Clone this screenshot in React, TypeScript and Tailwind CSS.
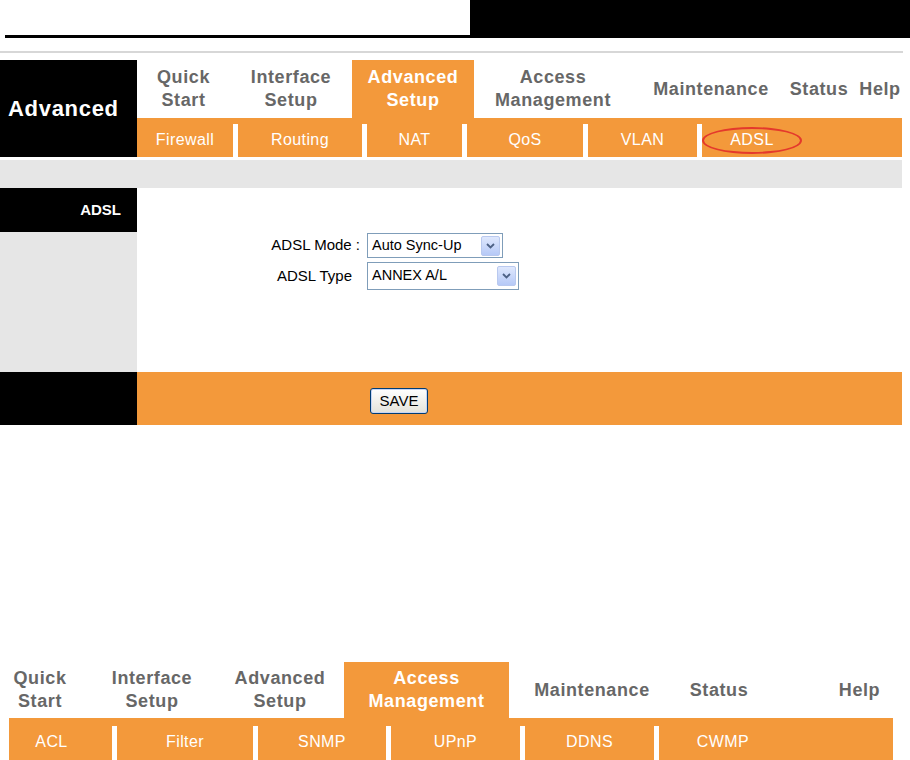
import React from "react"

type TopItem = { lines: string[]; w: string; active?: boolean }
type SubItem = { label: string; w: string; circled?: boolean; extra?: string }

const advancedTop: TopItem[] = [
  { lines: ["Quick", "Start"], w: "w-[93px]" },
  { lines: ["Interface", "Setup"], w: "w-[122px]" },
  { lines: ["Advanced", "Setup"], w: "w-[122px]", active: true },
  { lines: ["Access", "Management"], w: "w-[158px]" },
  { lines: ["Maintenance"], w: "w-[158px]" },
  { lines: ["Status"], w: "w-[58px]" },
  { lines: [""], w: "w-[10px]" },
  { lines: ["Help"], w: "w-[44px]" },
]

const advancedSub: SubItem[] = [
  { label: "Firewall", w: "w-[96px]" },
  { label: "Routing", w: "w-[124px]" },
  { label: "NAT", w: "w-[95px]" },
  { label: "QoS", w: "w-[116px]" },
  { label: "VLAN", w: "w-[109px]" },
  { label: "ADSL", w: "w-[100px]", circled: true },
]

const accessTop: TopItem[] = [
  { lines: ["Quick", "Start"], w: "w-[62px]" },
  { lines: ["Interface", "Setup"], w: "w-[162px]" },
  { lines: ["Advanced", "Setup"], w: "w-[94px]" },
  { lines: [""], w: "w-[17px]" },
  { lines: ["Access", "Management"], w: "w-[165px]", active: true },
  { lines: ["Maintenance"], w: "w-[166px]" },
  { lines: ["Status"], w: "w-[88px]" },
  { lines: [""], w: "w-[63px]" },
  { lines: ["Help"], w: "w-[67px]" },
]

const accessSub: SubItem[] = [
  { label: "ACL", w: "w-[103px]", extra: "pr-[18px]" },
  { label: "Filter", w: "w-[136px]" },
  { label: "SNMP", w: "w-[128px]" },
  { label: "UPnP", w: "w-[129px]" },
  { label: "DDNS", w: "w-[129px]" },
  { label: "CWMP", w: "w-[128px]" },
]

function TopRow({ items, h }: { items: TopItem[]; h: string }) {
  return (
    <div className={`flex ${h}`}>
      {items.map((it, i) => (
        <div
          key={i}
          className={`${it.w} flex shrink-0 flex-col items-center justify-center text-center text-[18px] font-bold leading-[23px] tracking-[0.6px] ${
            it.active ? "bg-[#f3993b] text-white" : "text-[#676767]"
          }`}
        >
          {it.lines.map((l, j) => (
            <span key={j} className="whitespace-nowrap">
              {l}
            </span>
          ))}
        </div>
      ))}
    </div>
  )
}

function SubRow({ items, h, sepTop, pad }: { items: SubItem[]; h: string; sepTop: string; pad: string }) {
  return (
    <div className={`flex ${h} bg-[#f3993b] text-[16px] tracking-[0.4px] text-white`}>
      {items.map((it, i) => (
        <React.Fragment key={i}>
          {i > 0 && <div className={`w-[5px] shrink-0 bg-white ${sepTop}`} />}
          <div className={`relative flex shrink-0 items-center justify-center ${pad} ${it.w} ${it.extra ?? ""}`}>
            {it.label}
            {it.circled && (
              <span className="absolute left-0 top-[9px] h-[27px] w-[100px] rounded-[50%] border-2 border-[#e4392c]" />
            )}
          </div>
        </React.Fragment>
      ))}
      <div className="flex-1" />
    </div>
  )
}

function Chevron() {
  return (
    <svg width="9" height="6" viewBox="0 0 9 6">
      <path d="M1 1 L4.5 4.5 L8 1" fill="none" stroke="#4d6185" strokeWidth="1.8" />
    </svg>
  )
}

function Select({ value, w, h }: { value: string; w: string; h: string }) {
  return (
    <div className={`flex ${w} ${h} items-center justify-between border border-[#7f9db9] bg-white pl-[4px] pr-[2px] text-[14.5px] text-black`}>
      <span className="whitespace-nowrap">{value}</span>
      <span className="flex h-[20px] w-[19px] items-center justify-center rounded-[2px] border border-[#b9c9ef] bg-gradient-to-b from-[#dfe8fd] to-[#b6c9f7]">
        <Chevron />
      </span>
    </div>
  )
}

export default function App() {
  return (
    <div className="h-[760px] w-[910px] overflow-hidden bg-white font-['Liberation_Sans',Arial,sans-serif]">
      {/* page header */}
      <div className="flex h-[38px]">
        <div className="flex w-[470px] flex-col justify-end pl-[5px]">
          <div className="h-[3px] bg-black" />
        </div>
        <div className="flex-1 bg-black" />
      </div>
      <div className="mt-[13px] h-[2px] w-[903px] bg-[#d7d7d7]" />

      {/* Advanced setup screen */}
      <div className="mt-[7px] flex w-[902px]">
        <div className="flex w-[137px] items-center bg-black pl-[8px] text-[22px] font-bold tracking-[0.7px] text-white">
          Advanced
        </div>
        <div className="flex flex-1 flex-col">
          <TopRow items={advancedTop} h="h-[58px]" />
          <SubRow items={advancedSub} h="h-[39px]" sepTop="mt-[6px]" pad="pt-[5px]" />
        </div>
      </div>
      <div className="mt-[3px] h-[28px] w-[902px] bg-[#e6e6e6]" />

      <div className="flex w-[902px]">
        <div className="flex w-[137px] flex-col">
          <div className="flex h-[44px] items-center justify-end bg-black pr-[16px] text-[15px] font-bold text-white">
            ADSL
          </div>
          <div className="h-[140px] bg-[#e6e6e6]" />
        </div>
        <div className="flex flex-1 flex-col gap-[4px] pt-[45px] text-[15px] text-black">
          <div className="flex items-center">
            <div className="w-[223px] text-right">ADSL Mode :</div>
            <div className="ml-[7px]">
              <Select value="Auto Sync-Up" w="w-[136px]" h="h-[25px]" />
            </div>
          </div>
          <div className="flex items-center">
            <div className="w-[215px] text-right">ADSL Type</div>
            <div className="ml-[15px]">
              <Select value="ANNEX A/L" w="w-[152px]" h="h-[28px]" />
            </div>
          </div>
        </div>
      </div>

      <div className="flex h-[53px] w-[902px]">
        <div className="w-[137px] bg-black" />
        <div className="flex flex-1 items-center bg-[#f3993b] pl-[233px] pt-[5px]">
          <button
            type="button"
            className="flex h-[26px] w-[58px] items-center justify-center rounded-[3px] border border-[#003c74] bg-gradient-to-b from-white to-[#e3e3db] text-[15px] text-black shadow-[inset_0_0_0_1px_#c6d5f5]"
          >
            SAVE
          </button>
        </div>
      </div>

      {/* Access management menu */}
      <div className="mt-[237px] ml-[9px] flex w-[884px] flex-col">
        <TopRow items={accessTop} h="h-[56px]" />
        <SubRow items={accessSub} h="h-[42px]" sepTop="mt-[8px]" pad="pt-[6px]" />
      </div>
    </div>
  )
}
